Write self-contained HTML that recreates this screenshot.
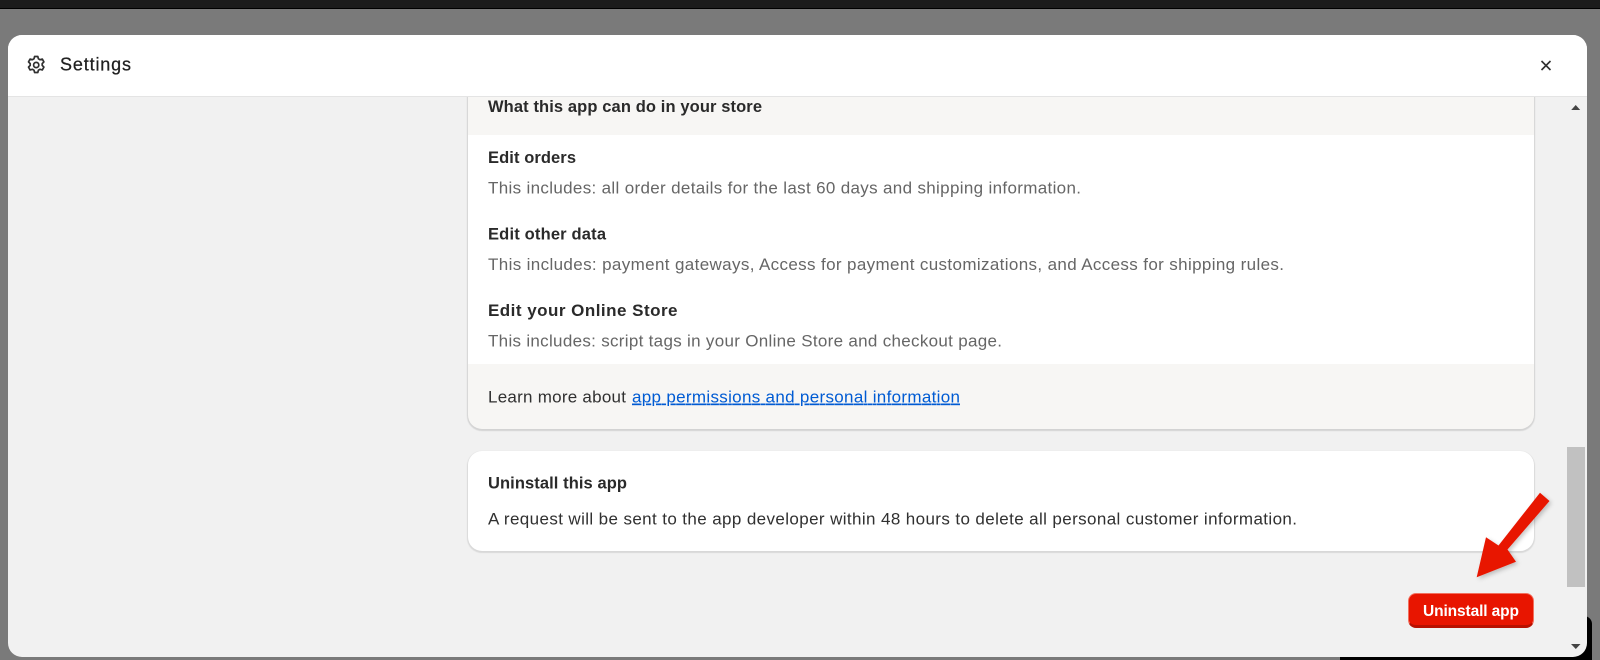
<!DOCTYPE html>
<html><head><meta charset="utf-8">
<style>
html,body{margin:0;padding:0;width:1600px;height:660px;overflow:hidden;background:#7a7a7a;font-family:"Liberation Sans",sans-serif}
.a{position:absolute}
text{font-family:"Liberation Sans",sans-serif;font-size:17px;fill:#303030}
.b{font-weight:700;fill:#2a2a2a;font-size:16.500px}
.g{fill:#666}
</style></head><body>
<div class="a" style="left:0;top:0;width:1600px;height:8px;background:#1c1c1c"></div>
<div class="a" style="left:0;top:8px;width:1600px;height:1px;background:#000"></div>
<div class="a" style="left:1340px;top:616px;width:252px;height:44px;background:#000;border-radius:8px 8px 0 0"></div>
<div class="a" style="left:8px;top:34.500px;width:1579px;height:622.500px;background:#f1f1f1;border-radius:14px;overflow:hidden">
  <div class="a" style="left:460px;top:39px;width:1066px;height:355px;background:#f7f6f4;border-radius:0 0 14px 14px;box-shadow:0 1px 1px 1px rgba(0,0,0,.12)"></div>
  <div class="a" style="left:460px;top:100px;width:1066px;height:229px;background:#fff"></div>
  <div class="a" style="left:460px;top:416px;width:1066px;height:100px;background:#fff;border-radius:14px;box-shadow:0 1px 1px 1px rgba(0,0,0,.1)"></div>
  <div class="a" style="left:1400px;top:558px;width:126px;height:35px;box-sizing:border-box;background:#e81500;border-radius:8px;border:1px solid #f2705f;border-bottom:3px solid #b81000"></div>
  <div class="a" style="left:1559px;top:412px;width:18px;height:140px;background:#c1c1c1"></div>
  <div class="a" style="left:0;top:0;width:1579px;height:61px;background:#fff;border-bottom:1px solid #e4e4e4"></div>
</div>
<svg class="a" style="left:0;top:0" width="1600" height="660" viewBox="0 0 1600 660">
  <defs><filter id="s" x="-20%" y="-20%" width="150%" height="150%"><feDropShadow dx="2" dy="2" stdDeviation="2" flood-color="#000" flood-opacity=".22"/></filter></defs>
  <g fill="none" stroke="#303030" stroke-width="1.700" stroke-linejoin="round">
    <path d="M34.600 56.500h3.200l.6 2.300 1.600.9 2.300-.6 1.600 2.800-1.700 1.700v1.800l1.700 1.700-1.600 2.800-2.300-.6-1.600.9-.6 2.300h-3.200l-.6-2.300-1.600-.9-2.300.6-1.600-2.800 1.700-1.700v-1.800l-1.700-1.700 1.600-2.800 2.300.6 1.600-.9z"/>
    <circle cx="36.200" cy="65" r="2.600"/>
  </g>
  <path d="M1541.500 61l9 9M1550.500 61l-9 9" stroke="#303030" stroke-width="1.600" fill="none"/>
  <path d="M1575.700 105l4.500 5h-9z" fill="#444"/>
  <path d="M1571 644h9.500l-4.700 5z" fill="#444"/>
  <text x="60" y="70.500" textLength="71" style="font-size:18px;fill:#1f1f1f;stroke:#1f1f1f;stroke-width:.25">Settings</text>
  <text class="b" x="488" y="112" textLength="274">What this app can do in your store</text>
  <text class="b" x="488" y="163" textLength="88">Edit orders</text>
  <text class="g" x="488" y="193.500" textLength="593">This includes: all order details for the last 60 days and shipping information.</text>
  <text class="b" x="488" y="239.500" textLength="118">Edit other data</text>
  <text class="g" x="488" y="270" textLength="796">This includes: payment gateways, Access for payment customizations, and Access for shipping rules.</text>
  <text class="b" x="488" y="316" textLength="189.500" style="font-size:17px">Edit your Online Store</text>
  <text class="g" x="488" y="346.500" textLength="514">This includes: script tags in your Online Store and checkout page.</text>
  <text x="488" y="402.500" textLength="138">Learn more about</text>
  <text x="632" y="402.500" textLength="328" style="fill:#005bd3;text-decoration:underline">app permissions and personal information</text>
  <text class="b" x="488" y="488.500" textLength="139">Uninstall this app</text>
  <text x="488" y="524.500" textLength="809">A request will be sent to the app developer within 48 hours to delete all personal customer information.</text>
  <text x="1423" y="616" textLength="96" style="font-weight:700;fill:#fff;font-size:15.500px">Uninstall app</text>
  <path d="M1540 492.700L1549.500 501L1507.500 549.500L1516 561.700L1476.700 577.300L1486 537.300L1498.500 545.500z" fill="#e81500" filter="url(#s)"/>
</svg>
</body></html>
